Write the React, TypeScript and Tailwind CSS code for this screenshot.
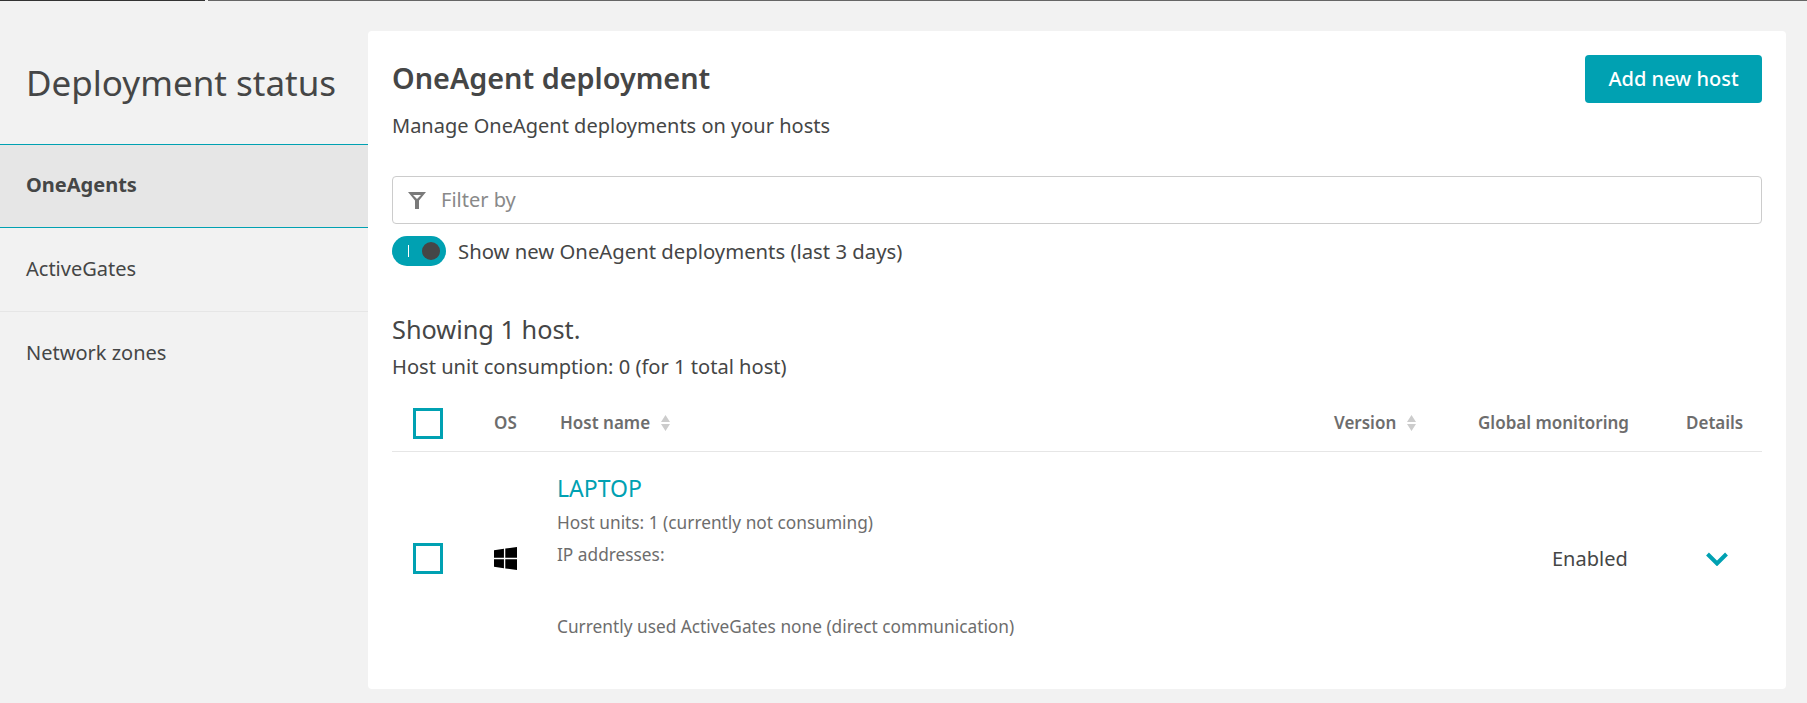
const font = { fontFamily: '"Noto Sans", sans-serif' };

function Checkbox() {
  return <div className="w-[30px] h-[31px] border-[3px] border-[#00a1b2] bg-white" />;
}

function SortIcon() {
  return (
    <svg width="9" height="16" viewBox="0 0 9 16" className="ml-[11px] fill-[#cccccc]">
      <path d="M4.5 0 L9 7 H0 Z M0 9 H9 L4.5 16 Z" />
    </svg>
  );
}

export default function App() {
  return (
    <div className="h-[703px] w-[1807px] overflow-hidden bg-[#f2f2f2] text-[#454646]" style={font}>
      {/* Top line */}
      <div className="flex h-px gap-[3px]">
        <div className="w-[205px] bg-[#333333]" />
        <div className="flex-1 bg-[#666666]" />
      </div>

      <div className="flex pr-[21px] pt-[30px]">
        {/* Sidebar */}
        <aside className="w-[368px] shrink-0">
          <h2 className="h-[113px] pl-[26px] pt-[32px] text-[35px] leading-[40px]">Deployment status</h2>
          <div className="flex h-[84px] items-center border-y border-[#00a1b2] bg-[#e6e6e6] pb-[2px] pl-[26px] text-[20px] font-bold">OneAgents</div>
          <div className="flex h-[84px] items-center border-b border-[#e6e6e6] pb-[2px] pl-[26px] text-[20px]">ActiveGates</div>
          <div className="flex h-[83px] items-center pb-[2px] pl-[26px] text-[20px]">Network zones</div>
        </aside>

        {/* Card */}
        <main className="h-[658px] flex-1 rounded-[4px] bg-white px-[24px] pt-[24px]">
          <div className="flex items-start justify-between">
            <div>
              <h1 className="mt-[5px] text-[28.8px] leading-[36px] font-semibold">OneAgent deployment</h1>
              <p className="mt-[18px] text-[20px] leading-[24px]">Manage OneAgent deployments on your hosts</p>
            </div>
            <button className="h-[48px] w-[177px] rounded-[4px] bg-[#00a1b2] text-[20px] font-medium text-white">Add new host</button>
          </div>

          <div className="mt-[38px] flex h-[48px] items-center rounded-[4px] border border-[#cccccc] pl-[15px]">
            <svg width="18" height="17" viewBox="0 0 18 17" className="fill-[#7a7a7a]" fillRule="evenodd">
              <path d="M0 0 H18 L11 8.5 V17 H7 V8.5 Z M5 3 L9 7 L13 3 Z" />
            </svg>
            <span className="ml-[15px] text-[20px] text-[#898989]">Filter by</span>
          </div>

          <div className="mt-[12px] flex h-[30px] items-center">
            <div className="relative h-[30px] w-[54px] rounded-full bg-[#00a1b2]">
              <div className="absolute left-[16px] top-[9px] h-[12px] w-px bg-white" />
              <div className="absolute left-[30px] top-[6px] h-[18px] w-[18px] rounded-full bg-[#454646]" />
            </div>
            <span className="ml-[12px] text-[20.3px]">Show new OneAgent deployments (last 3 days)</span>
          </div>

          <h3 className="mt-[45px] text-[25.3px] leading-[36px]">Showing 1 host.</h3>
          <p className="mt-[8px] text-[20.1px] leading-[24px]">Host unit consumption: 0 (for 1 total host)</p>

          {/* Table header */}
          <div className="mt-[19px] flex h-[54px] items-center border-b border-[#e6e6e6] pb-[3px] text-[17px] font-semibold text-[#6d6d6d]">
            <div className="w-[102px] pl-[21px]"><Checkbox /></div>
            <div className="w-[66px]">OS</div>
            <div className="flex flex-1 items-center">Host name<SortIcon /></div>
            <div className="flex w-[144px] items-center">Version<SortIcon /></div>
            <div className="w-[208px]">Global monitoring</div>
            <div className="w-[76px]">Details</div>
          </div>

          {/* Row */}
          <div className="flex h-[213px] items-center">
            <div className="w-[102px] pl-[21px]"><Checkbox /></div>
            <div className="w-[63px]">
              <svg width="23" height="23" viewBox="0 0 22 23" preserveAspectRatio="none" className="fill-black">
                <path d="M0 3.2 L9.5 1.8 V10.8 H0 Z M10.8 1.6 L22 0 V10.8 H10.8 Z M0 12.2 H9.5 V21.2 L0 19.8 Z M10.8 12.2 H22 V23 L10.8 21.4 Z" />
              </svg>
            </div>
            <div className="flex-1 pb-[7px] text-[#6d6d6d]">
              <a className="block text-[23px] leading-[30px] text-[#00a1b2]">LAPTOP</a>
              <p className="mt-[9px] text-[17.3px] leading-[22px]">Host units: 1 (currently not consuming)</p>
              <p className="mt-[10px] text-[17.3px] leading-[22px]">IP addresses:</p>
              <p className="mt-[50px] text-[17.3px] leading-[22px]">Currently used ActiveGates none (direct communication)</p>
            </div>
            <div className="w-[154px] text-[20px]">Enabled</div>
            <div className="w-[56px]">
              <svg width="22" height="14" viewBox="0 0 22 14" className="fill-none stroke-[#00a1b2] stroke-[4]">
                <path d="M1.5 2 L11 11.5 L20.5 2" />
              </svg>
            </div>
          </div>
        </main>
      </div>
    </div>
  );
}
